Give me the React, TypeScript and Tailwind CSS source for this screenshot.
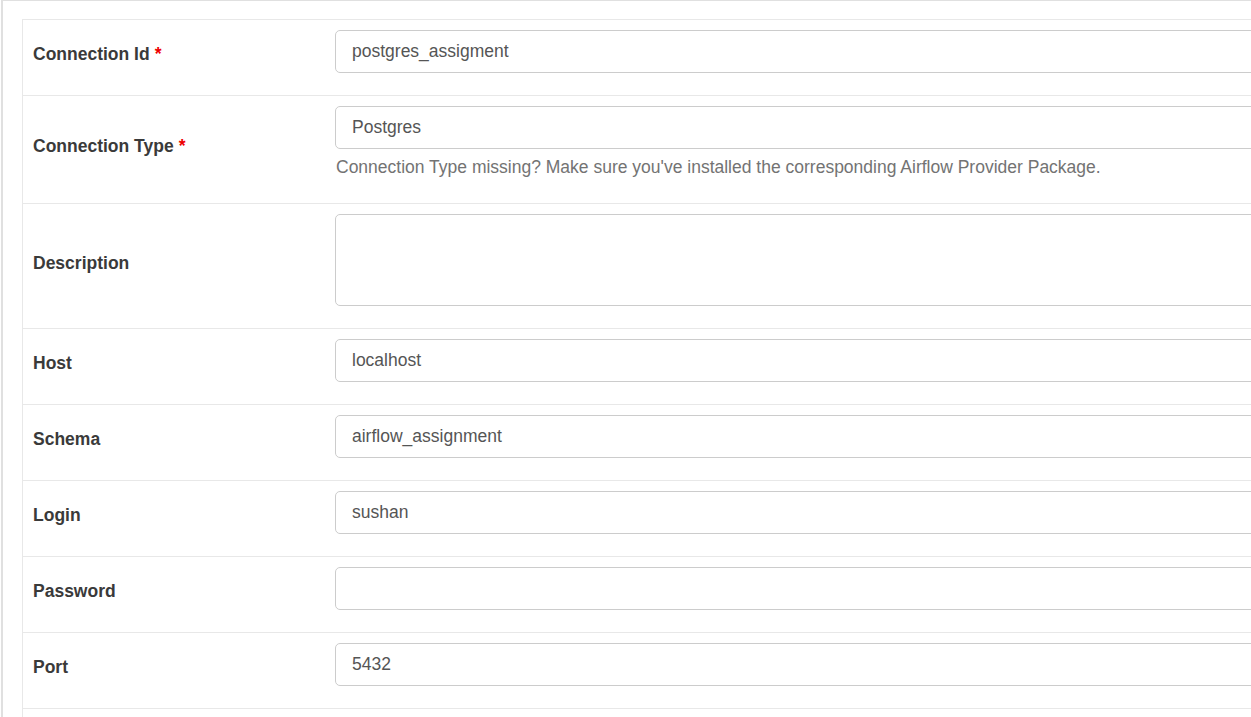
import React from "react";

const font = { fontFamily: '"Liberation Sans", Arial, sans-serif' };

function Label({ text, required }: { text: string; required?: boolean }) {
  return (
    <div className="w-[302px] shrink-0 pl-[10px] flex items-center pb-[6px] text-[17.5px] font-bold text-[#3a3a3a]">
      <span>{text}</span>
      {required && <span className="ml-[5px] text-[#e00] font-bold">*</span>}
    </div>
  );
}

function Input({ value }: { value: string }) {
  return (
    <div className="h-[43px] w-[1000px] rounded-[5px] border border-[#ccc] bg-white pl-[16px] pb-px flex items-center text-[17.5px] text-[#555]">
      {value}
    </div>
  );
}

function Row({
  label,
  required,
  children,
}: {
  label: string;
  required?: boolean;
  children: React.ReactNode;
}) {
  return (
    <div className="flex border-t border-[#e8e8e8]">
      <Label text={label} required={required} />
      <div className="flex-1 pl-[10px] pt-[10px] pb-[22px] min-w-0 overflow-hidden">{children}</div>
    </div>
  );
}

export default function App() {
  return (
    <div
      className="h-[717px] w-[1251px] overflow-hidden bg-white ml-px border-l-2 border-t border-[#e0e0e0] pl-[19px] pt-[18px]"
      style={font}
    >
      <div className="border-l border-[#e8e8e8] overflow-hidden h-[800px]">
        <Row label="Connection Id" required>
          <Input value="postgres_assigment" />
        </Row>
        <div className="flex border-t border-[#e8e8e8]">
          <Label text="Connection Type" required />
          <div className="flex-1 pl-[10px] pt-[10px] pb-[22px] min-w-0 overflow-hidden">
            <Input value="Postgres" />
            <div className="mt-[5px] h-[27px] flex items-center text-[17.5px] text-[#737373] whitespace-nowrap pl-px">
              Connection Type missing? Make sure you've installed the corresponding Airflow Provider Package.
            </div>
          </div>
        </div>
        <Row label="Description">
          <div className="h-[92px] w-[1000px] rounded-[5px] border border-[#ccc] bg-white" />
        </Row>
        <Row label="Host">
          <Input value="localhost" />
        </Row>
        <Row label="Schema">
          <Input value="airflow_assignment" />
        </Row>
        <Row label="Login">
          <Input value="sushan" />
        </Row>
        <Row label="Password">
          <Input value="" />
        </Row>
        <Row label="Port">
          <Input value="5432" />
        </Row>
        <div className="border-t border-[#e8e8e8] h-[76px]" />
      </div>
    </div>
  );
}
